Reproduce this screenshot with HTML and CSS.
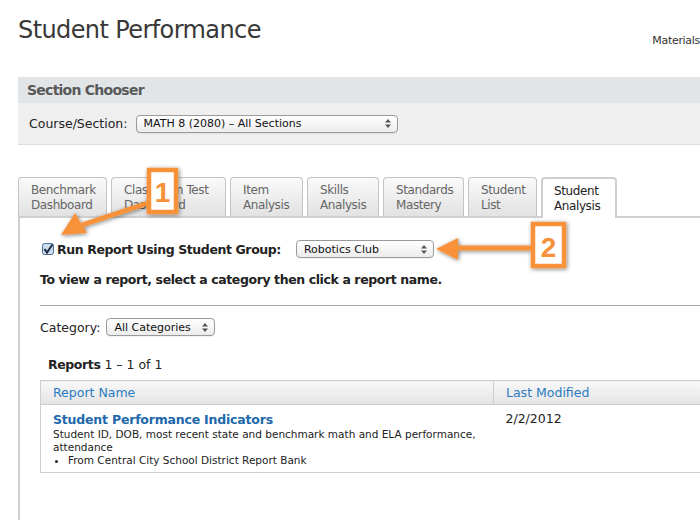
FILE: index.html
```html
<!DOCTYPE html>
<html>
<head>
<meta charset="utf-8">
<link rel="stylesheet" href="styles.css">
</head>
<body>
<div class="page">
  <header class="top">
    <h1 class="title">Student Performance</h1>
    <a class="materials">Materials</a>
  </header>

  <section class="chooser">
    <div class="chooser-head">Section Chooser</div>
    <div class="chooser-body">
      <label class="lbl">Course/Section:</label>
      <div class="select sel-course"><span>MATH 8 (2080) – All Sections</span><svg class="updown" width="6" height="9" viewBox="0 0 6 9"><path d="M3 0 L6 3.5 H0 Z M3 9 L6 5.5 H0 Z" fill="#555"/></svg></div>
    </div>
  </section>

  <nav class="tabs">
    <div class="tab w1">Benchmark<br>Dashboard</div>
    <div class="tab w2">Classroom Test<br>Dashboard</div>
    <div class="tab w3">Item<br>Analysis</div>
    <div class="tab w4">Skills<br>Analysis</div>
    <div class="tab w5">Standards<br>Mastery</div>
    <div class="tab w6">Student<br>List</div>
    <div class="tab w7 active">Student<br>Analysis</div>
  </nav>

  <div class="panel">
    <div class="group-row">
      <svg class="check" width="12" height="12" viewBox="0 0 12 12"><rect x="0.5" y="0.5" width="11" height="11" rx="2" fill="#c9dcf0" stroke="#4a6d94"/><path d="M2.5 6 L5 9.5 L10.5 1.5" fill="none" stroke="#1b2a3d" stroke-width="2"/></svg>
      <span class="bold">Run Report Using Student Group:</span>
      <div class="select sel-group"><span>Robotics Club</span><svg class="updown" width="6" height="9" viewBox="0 0 6 9"><path d="M3 0 L6 3.5 H0 Z M3 9 L6 5.5 H0 Z" fill="#555"/></svg></div>
    </div>
    <p class="bold hint">To view a report, select a category then click a report name.</p>
    <hr class="rule">
    <div class="cat-row">
      <label class="lbl">Category:</label>
      <div class="select sel-cat"><span>All Categories</span><svg class="updown" width="6" height="9" viewBox="0 0 6 9"><path d="M3 0 L6 3.5 H0 Z M3 9 L6 5.5 H0 Z" fill="#555"/></svg></div>
    </div>
    <div class="count"><b>Reports</b> 1 – 1 of 1</div>
    <table class="reports">
      <thead>
        <tr><th class="c1">Report Name</th><th class="c2">Last Modified</th></tr>
      </thead>
      <tbody>
        <tr>
          <td class="c1">
            <a class="rname">Student Performance Indicators</a>
            <div class="desc">Student ID, DOB, most recent state and benchmark math and ELA performance, attendance</div>
            <ul class="src"><li>From Central City School District Report Bank</li></ul>
          </td>
          <td class="c2 date">2/2/2012</td>
        </tr>
      </tbody>
    </table>
  </div>
</div>

<svg class="callout callout1" width="200" height="110" viewBox="0 0 200 110">
  <defs>
    <filter id="sh" x="-30%" y="-30%" width="160%" height="160%"><feGaussianBlur in="SourceAlpha" stdDeviation="2"/><feOffset dx="1" dy="1"/><feComponentTransfer><feFuncA type="linear" slope="0.5"/></feComponentTransfer><feMerge><feMergeNode/><feMergeNode in="SourceGraphic"/></feMerge></filter>
  </defs>
  <g filter="url(#sh)">
    <path d="M118 45 L52 67" stroke="#f7923a" stroke-width="5" fill="none"/>
    <path d="M31 77 L45 55 L57 75 Z" fill="#f7923a"/>
    <rect x="119" y="12" width="27" height="42" fill="#fff" stroke="#f7923a" stroke-width="4.5"/>
  </g>
  <text x="132.5" y="44" text-anchor="middle" class="num">1</text>
</svg>

<svg class="callout callout2" width="160" height="70" viewBox="0 0 160 70">
  <g filter="url(#sh)">
    <path d="M110 33 L35 33" stroke="#f7923a" stroke-width="5" fill="none"/>
    <path d="M15 34 L37 23 L37 45 Z" fill="#f7923a"/>
    <rect x="112" y="9" width="31" height="42" fill="#fff" stroke="#f7923a" stroke-width="4.5"/>
  </g>
  <text x="127.5" y="42" text-anchor="middle" class="num">2</text>
</svg>
</body>
</html>
```

FILE: styles.css
```css
html, body {
  margin: 0;
  padding: 0;
  background: #fff;
  overflow: hidden;
  width: 700px;
  height: 520px;
}
body {
  font-family: "DejaVu Sans", "Liberation Sans", sans-serif;
  color: #222;
  font-size: 12px;
  position: relative;
}
.page {
  padding-left: 18px;
}
.top {
  display: flex;
  align-items: flex-start;
  height: 77px;
  box-sizing: border-box;
  padding-top: 15px;
}
.title {
  margin: 0;
  font-weight: normal;
  font-size: 24px;
  line-height: 30px;
  color: #383838;
  letter-spacing: -0.6px;
  flex: 0 0 auto;
}
.materials {
  margin-left: auto;
  margin-top: 19px;
  font-size: 11px;
  line-height: 13px;
  letter-spacing: -0.3px;
  color: #333;
  white-space: nowrap;
  margin-right: 0;
}
.chooser {
  background: #efefef;
  border-bottom: 1px solid #dcdcdc;
}
.chooser-head {
  background: #e1e5e8;
  height: 26px;
  line-height: 27px;
  padding-left: 9px;
  font-weight: bold;
  font-size: 14px;
  letter-spacing: -0.75px;
  color: #595959;
}
.chooser-body {
  height: 41px;
  display: flex;
  align-items: center;
  padding-left: 11px;
}
.lbl {
  font-size: 12.5px;
  color: #222;
}
.select {
  display: flex;
  align-items: center;
  justify-content: space-between;
  box-sizing: border-box;
  height: 18px;
  border: 1px solid #9a9a9a;
  border-radius: 4px;
  background: linear-gradient(#ffffff, #ececec);
  font-size: 11px;
  color: #111;
  padding: 0 6px 0 7px;
  box-shadow: 0 1px 0 rgba(0,0,0,0.05);
}
.sel-course { width: 262px; margin-left: 8px; }
.sel-group { width: 138px; margin-left: 15px; }
.sel-cat { width: 109px; margin-left: 6px; }
.updown { flex: 0 0 auto; }

.tabs {
  display: flex;
  gap: 4px;
  margin-top: 32px;
  height: 39px;
  position: relative;
  z-index: 1;
}
.tab {
  box-sizing: border-box;
  height: 39px;
  border: 1px solid #c4c4c4;
  border-bottom: none;
  border-radius: 4px 4px 0 0;
  background: linear-gradient(#fafafa, #e2e2e2);
  color: #666;
  font-size: 12px;
  letter-spacing: -0.4px;
  line-height: 15px;
  padding: 5px 0 0 12px;
  white-space: nowrap;
}
.tab.active {
  background: #fff;
  color: #222;
  height: 41px;
  border: 2px solid #cfcfcf;
  border-bottom: none;
  padding-top: 5px;
  padding-left: 11px;
}
.w1 { width: 89px; }
.w2 { width: 115px; }
.w3 { width: 73px; }
.w4 { width: 72px; }
.w5 { width: 81px; }
.w6 { width: 69px; }
.w7 { width: 76px; }

.panel {
  border-top: 2px solid #cfcfcf;
  border-left: 2px solid #cfcfcf;
  padding: 22px 0 40px 20px;
  min-height: 300px;
}
.bold {
  font-weight: bold;
  letter-spacing: -0.4px;
}
.group-row {
  display: flex;
  align-items: center;
  height: 18px;
  padding-left: 2px;
  font-size: 12.5px;
}
.check { margin-right: 3px; }
.hint {
  margin: 14px 0 0;
  font-size: 12.5px;
  line-height: 15px;
}
.rule {
  border: none;
  border-top: 1px solid #a8a8a8;
  margin: 18px 0 0;
  height: 0;
}
.cat-row {
  display: flex;
  align-items: center;
  margin-top: 12px;
  height: 18px;
}
.count {
  margin: 21px 0 0 8px;
  font-size: 12.5px;
  line-height: 15px;
}
.count b { font-weight: bold; letter-spacing: -0.4px; }
.reports {
  margin-top: 8px;
  width: 680px;
  border-collapse: collapse;
  border: 1px solid #cfcfcf;
  border-right: none;
}
.reports th {
  height: 23px;
  background: linear-gradient(#f8f8f8, #e4e4e4);
  border-bottom: 1px solid #cfcfcf;
  text-align: left;
  font-weight: normal;
  font-size: 12.5px;
  color: #2a7bc0;
  padding: 0 0 0 12px;
}
.reports th.c1 { width: 440px; border-right: 1px solid #cfcfcf; }
.reports td {
  vertical-align: top;
  padding: 7px 0 5px 12px;
}
.rname {
  display: block;
  font-weight: bold;
  font-size: 12.5px;
  letter-spacing: -0.2px;
  line-height: 16px;
  color: #2068ab;
}
.desc {
  font-size: 10.5px;
  line-height: 13px;
  color: #222;
  width: 440px;
}
.src {
  margin: 0;
  padding: 0 0 0 15px;
  font-size: 10.5px;
  line-height: 13px;
}
.date {
  font-size: 12.5px;
  color: #222;
  padding-top: 6px !important;
}

.callout {
  position: absolute;
  z-index: 5;
}
.callout1 { left: 30px; top: 158px; }
.callout2 { left: 421px; top: 215px; }
.num {
  font-family: "Liberation Sans", sans-serif;
  font-weight: bold;
  font-size: 28px;
  fill: #f7923a;
}
```
